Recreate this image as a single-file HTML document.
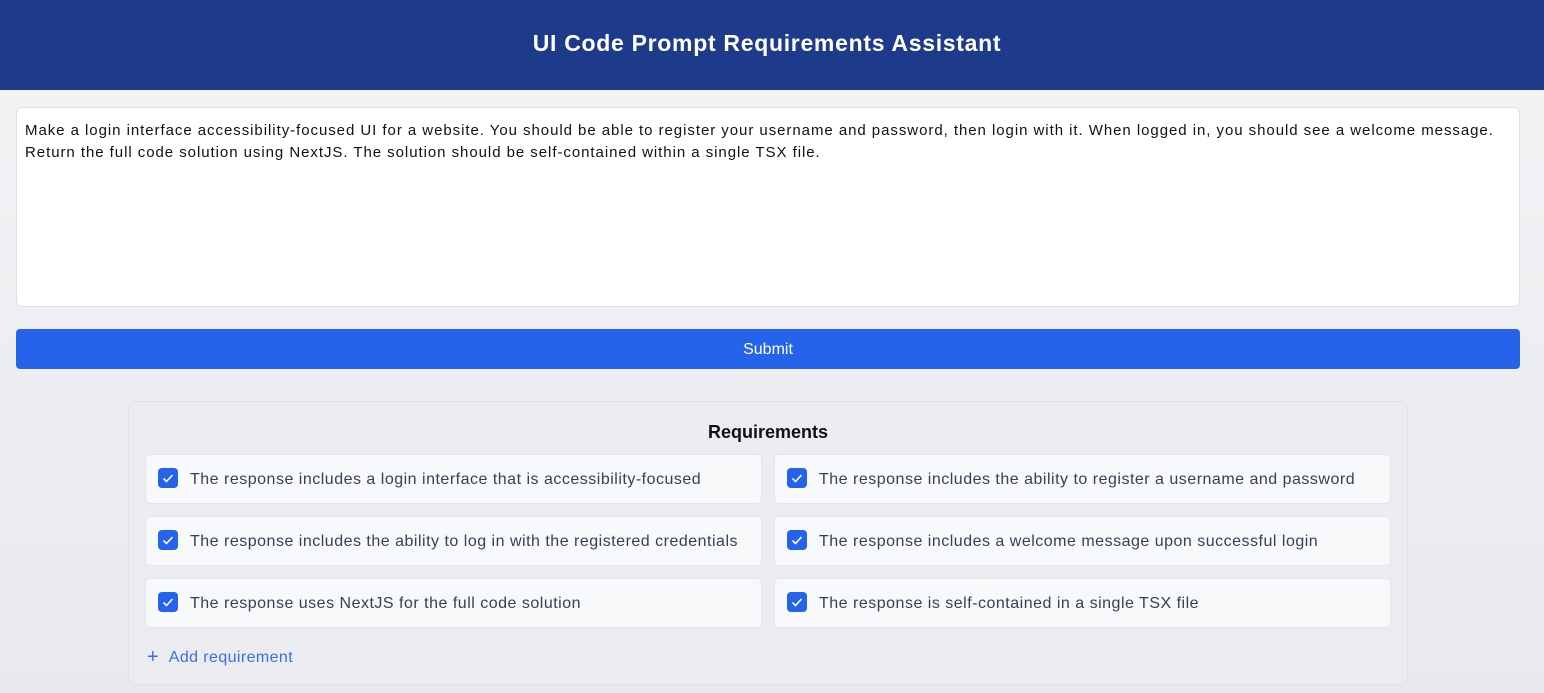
<!DOCTYPE html>
<html><head><style>
*{box-sizing:border-box;margin:0;padding:0}
body{width:1544px;height:693px;overflow:hidden;font-family:"Liberation Sans",sans-serif;background:linear-gradient(#f3f4f6,#e8e9ed);position:relative}
.hdr{height:90px;background:#1e3a8a;color:#fff;font-weight:bold;font-size:23px;letter-spacing:0.7px;text-align:center;line-height:86px;padding-right:10px}
.ta{position:absolute;left:16px;top:107px;width:1504px;height:200px;background:#fff;border:1px solid #dcdfe4;border-radius:6px;padding:12px 8px;font-size:15px;letter-spacing:0.95px;line-height:22px;color:#111;white-space:nowrap}
.btn{position:absolute;left:16px;top:329px;width:1504px;height:40px;background:#2563eb;border-radius:4px;color:#fff;font-size:16px;text-align:center;line-height:41px}
.panel{position:absolute;left:128px;top:401px;width:1280px;height:284px;border:1px solid #e0e2e6;border-radius:8px;background:rgba(236,237,241,.6)}
.title{position:absolute;top:20px;width:100%;text-align:center;font-weight:bold;font-size:18px;color:#111}
.it{position:absolute;width:617px;height:50px;background:#f8f9fb;border:1px solid #e3e5e9;border-radius:5px;font-size:16px;letter-spacing:0.5px;color:#374151;line-height:50px;padding-left:44px}
.cb{position:absolute;left:12px;top:13px;width:20px;height:20px;background:#2563eb;border-radius:4px}
.add{position:absolute;left:18px;top:243px;color:#3b6fe0;font-size:16px;letter-spacing:0.4px}
</style></head><body>
<div class="hdr">UI Code Prompt Requirements Assistant</div>
<div class="ta">Make a login interface accessibility-focused UI for a website. You should be able to register your username and password, then login with it. When logged in, you should see a welcome message.<br>Return the full code solution using NextJS. The solution should be self-contained within a single TSX file.</div>
<div class="btn">Submit</div>
<div class="panel">
<div class="title">Requirements</div>
<div class="it" style="left:16px;top:52px"><svg class="cb" viewBox="0 0 20 20"><path d="M5.5 10.5l3 3 6-6.5" stroke="#fff" stroke-width="1.6" fill="none"/></svg>The response includes a login interface that is accessibility-focused</div>
<div class="it" style="left:645px;top:52px"><svg class="cb" viewBox="0 0 20 20"><path d="M5.5 10.5l3 3 6-6.5" stroke="#fff" stroke-width="1.6" fill="none"/></svg>The response includes the ability to register a username and password</div>
<div class="it" style="left:16px;top:114px"><svg class="cb" viewBox="0 0 20 20"><path d="M5.5 10.5l3 3 6-6.5" stroke="#fff" stroke-width="1.6" fill="none"/></svg>The response includes the ability to log in with the registered credentials</div>
<div class="it" style="left:645px;top:114px"><svg class="cb" viewBox="0 0 20 20"><path d="M5.5 10.5l3 3 6-6.5" stroke="#fff" stroke-width="1.6" fill="none"/></svg>The response includes a welcome message upon successful login</div>
<div class="it" style="left:16px;top:176px"><svg class="cb" viewBox="0 0 20 20"><path d="M5.5 10.5l3 3 6-6.5" stroke="#fff" stroke-width="1.6" fill="none"/></svg>The response uses NextJS for the full code solution</div>
<div class="it" style="left:645px;top:176px"><svg class="cb" viewBox="0 0 20 20"><path d="M5.5 10.5l3 3 6-6.5" stroke="#fff" stroke-width="1.6" fill="none"/></svg>The response is self-contained in a single TSX file</div>
<div class="add"><span style="font-size:20px;position:relative;top:1px">+</span>&nbsp;&nbsp;Add requirement</div>
</div>
</body></html>
